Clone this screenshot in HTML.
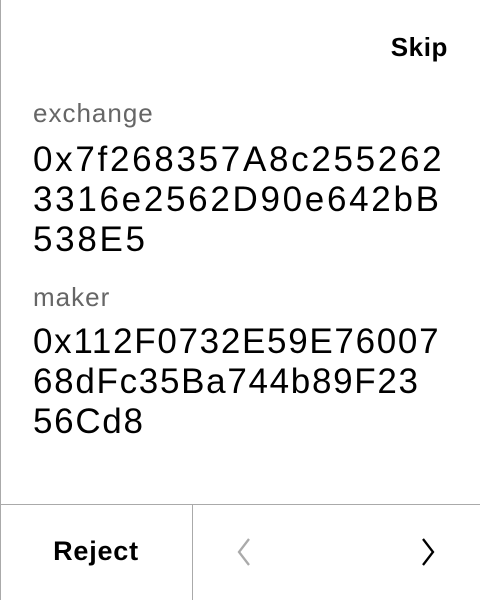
<!DOCTYPE html>
<html><head><style>
html,body{margin:0;padding:0;background:#fff;}
body{width:480px;height:600px;position:relative;overflow:hidden;font-family:"Liberation Sans",sans-serif;color:#000;}
.lb{position:absolute;left:0;top:0;width:1px;height:600px;background:#aaa;}
.skip{position:absolute;right:32px;top:33px;font-size:26px;font-weight:bold;line-height:28px;letter-spacing:0.6px;}
.lab{position:absolute;left:33px;font-size:26px;color:#666;letter-spacing:1px;line-height:30px;}
.addr{position:absolute;left:33px;font-size:35px;line-height:40px;letter-spacing:2.2px;white-space:nowrap;}
.hl{position:absolute;left:0;top:504px;width:480px;height:1px;background:#aaa;}
.vl{position:absolute;left:192px;top:504px;width:1px;height:96px;background:#aaa;}
.rej{position:absolute;left:0;width:192px;top:537px;text-align:center;font-size:27px;font-weight:bold;line-height:28px;letter-spacing:0.8px;}
svg{position:absolute;}
</style></head><body>
<div class="lb"></div>
<div class="skip">Skip</div>
<div class="lab" style="top:98px">exchange</div>
<div class="addr" style="top:140px;letter-spacing:2.7px">0x7f268357A8c255262<br>3316e2562D90e642bB<br>538E5</div>
<div class="lab" style="top:282px">maker</div>
<div class="addr" style="top:322px;letter-spacing:1.7px">0x112F0732E59E76007<br>68dFc35Ba744b89F23<br>56Cd8</div>
<div class="hl"></div><div class="vl"></div>
<div class="rej">Reject</div>
<svg style="left:232px;top:536px" width="20" height="32" viewBox="0 0 20 32"><path d="M17 3 L7 16 L17 29" fill="none" stroke="#aaa" stroke-width="2.3"/></svg>
<svg style="left:420px;top:536px" width="20" height="32" viewBox="0 0 20 32"><path d="M3 3 L13 16 L3 29" fill="none" stroke="#000" stroke-width="2.3"/></svg>
</body></html>
